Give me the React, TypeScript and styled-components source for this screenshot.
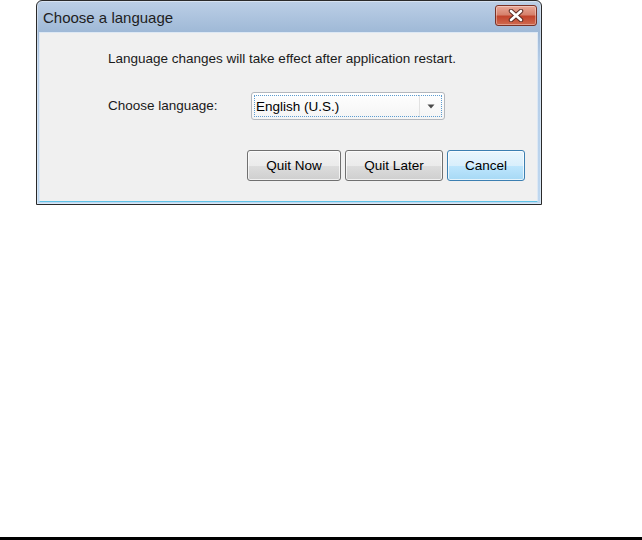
import styled, { createGlobalStyle } from 'styled-components'

const GlobalStyle = createGlobalStyle`
  html, body {
    margin: 0;
    padding: 0;
    background: #ffffff;
  }
  body {
    font-family: "Liberation Sans", Arial, sans-serif;
  }
`

const Page = styled.div`
  width: 642px;
  height: 540px;
  display: flex;
  flex-direction: column;
  justify-content: space-between;
`

const Window = styled.div`
  margin-left: 36px;
  width: 506px;
  height: 205px;
  box-sizing: border-box;
  border: 1px solid #2a2a2a;
  border-radius: 6px 6px 0 0;
  background: linear-gradient(180deg, #bccfe6 0px, #9fb9d7 31px, #b4cce7 60px, #bfd8f0 100%);
  display: flex;
  flex-direction: column;
  box-shadow: inset 0 0 0 1px rgba(255, 255, 255, 0.4);
`

const TitleBar = styled.div`
  height: 31px;
  flex: none;
  display: flex;
  align-items: center;
  justify-content: space-between;
  padding: 0 4px 0 6px;
`

const Title = styled.span`
  font-size: 15px;
  color: #1e1e1e;
  margin-top: 2px;
`

const CloseButton = styled.div`
  width: 42px;
  height: 21px;
  margin-top: -2px;
  box-sizing: border-box;
  border: 1px solid #7a3226;
  border-radius: 3px;
  background: linear-gradient(180deg, #e9a898 0%, #d6826d 45%, #c2452d 55%, #cf6a4f 100%);
  display: flex;
  align-items: center;
  justify-content: center;
  box-shadow: inset 0 0 0 1px rgba(255, 255, 255, 0.35);
`

const Content = styled.div`
  flex: 1;
  margin: 0 3px 2px 2px;
  background: #f0f0f0;
  border: 1px solid #dde8f4;
  border-bottom-color: #5ec3e6;
  display: flex;
  flex-direction: column;
  padding: 17px 12px 0 68px;
  font-size: 13.5px;
  color: #1a1a1a;
`

const Message = styled.div`
  height: 18px;
  line-height: 18px;
`

const LanguageRow = styled.div`
  display: grid;
  grid-template-columns: 143px 194px;
  align-items: center;
  margin-top: 24px;
`

const Label = styled.span`
  line-height: 18px;
`

const Combo = styled.div`
  height: 28px;
  box-sizing: border-box;
  border: 1px solid #b3b7bd;
  border-radius: 3px;
  background: linear-gradient(180deg, #ffffff 0%, #f4f4f4 100%);
  display: flex;
  padding: 2px;
`

const ComboField = styled.div`
  flex: 1;
  display: flex;
  align-items: center;
  border: 1px dotted #5d9cd0;
  border-right: none;
  padding-left: 1px;
  color: #000;
`

const ComboArrow = styled.div`
  width: 21px;
  display: flex;
  align-items: center;
  justify-content: center;
  border: 1px dotted #5d9cd0;
  border-left: 1px solid #e2e2e2;
`

const ButtonRow = styled.div`
  display: flex;
  justify-content: flex-end;
  gap: 4px;
  margin-top: 30px;
`

const Button = styled.div<{ $width: number; $default?: boolean }>`
  width: ${(p) => p.$width}px;
  height: 31px;
  box-sizing: border-box;
  display: flex;
  align-items: center;
  justify-content: center;
  border: 1px solid ${(p) => (p.$default ? '#3c7fb1' : '#707070')};
  border-radius: 3px;
  background: ${(p) =>
    p.$default
      ? 'linear-gradient(180deg, #eaf6fd 0%, #d9effc 50%, #bee6fd 51%, #a7d9f5 100%)'
      : 'linear-gradient(180deg, #f2f2f2 0%, #ebebeb 50%, #dddddd 51%, #cfcfcf 100%)'};
  box-shadow: inset 0 0 0 1px rgba(255, 255, 255, 0.7);
  color: #000;
`

const BottomRule = styled.div`
  height: 3px;
  background: #000;
`

export default function App() {
  return (
    <>
      <GlobalStyle />
      <Page>
        <Window>
          <TitleBar>
            <Title>Choose a language</Title>
            <CloseButton>
              <svg width="16" height="13" viewBox="0 0 16 13">
                <path
                  d="M3 2 L13 11 M13 2 L3 11"
                  stroke="#5a2a22"
                  strokeWidth="4.5"
                  strokeLinecap="round"
                />
                <path
                  d="M3 2 L13 11 M13 2 L3 11"
                  stroke="#ffffff"
                  strokeWidth="2.6"
                  strokeLinecap="round"
                />
              </svg>
            </CloseButton>
          </TitleBar>
          <Content>
            <Message>Language changes will take effect after application restart.</Message>
            <LanguageRow>
              <Label>Choose language:</Label>
              <Combo>
                <ComboField>English (U.S.)</ComboField>
                <ComboArrow>
                  <svg width="8" height="5" viewBox="0 0 8 5">
                    <path d="M0.5 0.5 L7.5 0.5 L4 4.5 Z" fill="#4a4a4a" />
                  </svg>
                </ComboArrow>
              </Combo>
            </LanguageRow>
            <ButtonRow>
              <Button $width={94}>Quit Now</Button>
              <Button $width={98}>Quit Later</Button>
              <Button $width={78} $default>
                Cancel
              </Button>
            </ButtonRow>
          </Content>
        </Window>
        <BottomRule />
      </Page>
    </>
  )
}
